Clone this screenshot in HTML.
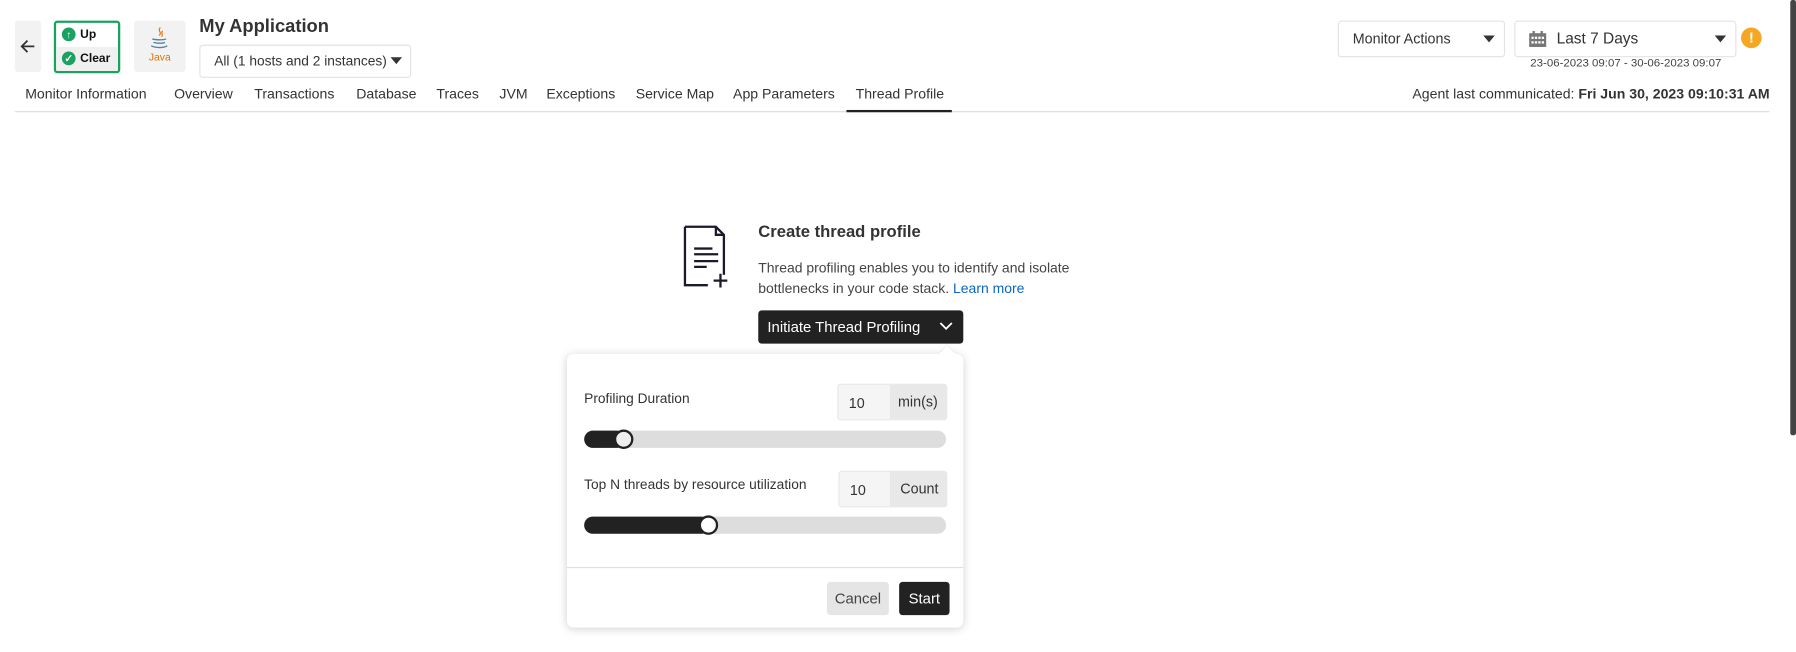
<!DOCTYPE html>
<html><head><meta charset="utf-8"><style>
html,body{margin:0;padding:0;background:#fff;overflow:hidden}
body{width:1796px;height:652px;position:relative}
#w{position:absolute;left:0;top:0;width:1568px;height:569px;transform:scale(1.14541);transform-origin:0 0;font-family:"Liberation Sans",sans-serif;color:#333}
.a{position:absolute}
.tab{position:absolute;top:75px;font-size:12.3px;color:#333}
.box{position:absolute;border:1px solid #e3e3e3;border-radius:3px;background:#fff}
</style></head><body><div id="w">
<div class="a" style="left:13px;top:18px;width:23px;height:45px;background:#f2f2f2;border-radius:3px"></div>
<svg class="a" style="left:17px;top:33px" width="15" height="15" viewBox="0 0 15 15"><path d="M13 7.5H2M7 2.5L2 7.5l5 5" stroke="#333" stroke-width="1.6" fill="none"/></svg>
<div class="a" style="left:47px;top:18px;width:54px;height:42px;border:2px solid #1aa260;border-radius:3px;overflow:hidden">
 <div style="height:21px;font:bold 10.5px 'Liberation Sans',sans-serif;line-height:21px;padding-left:21px;position:relative;color:#111">Up<span style="position:absolute;left:5px;top:4px;width:12px;height:12px;border-radius:50%;background:#1aa260;color:#fff;font-size:9px;line-height:12px;text-align:center">↑</span></div>
 <div style="height:21px;background:#f0f0f0;font:bold 10.5px 'Liberation Sans',sans-serif;line-height:21px;padding-left:21px;position:relative;color:#111">Clear<span style="position:absolute;left:5px;top:4px;width:12px;height:12px;border-radius:50%;background:#1aa260;color:#fff;font-size:9px;line-height:12px;text-align:center">✓</span></div>
</div>
<div class="a" style="left:117px;top:18px;width:45px;height:45px;background:#f2f2f2;border-radius:3px"></div>
<svg class="a" style="left:128px;top:22px" width="22" height="22" viewBox="0 0 22 22"><path d="M12 2c-3 3 2 4-1 7M14 5c-2 2 1 3-1 5" stroke="#e76f00" fill="none"/><path d="M5 12c3 1 10 1 12 0M6 15c3 1 8 1 10 0M4 18c4 2 11 2 14 0" stroke="#5382a1" fill="none" stroke-width="1.2"/></svg>
<div class="a" style="left:130px;top:45px;font-size:9px;color:#e76f00">Java</div>
<div class="a" style="left:174px;top:15px;font-weight:bold;font-size:16px;color:#333">My Application</div>
<div class="box" style="left:174px;top:39px;width:183px;height:27px"><span class="a" style="left:12px;top:6px;font-size:12px">All (1 hosts and 2 instances)</span><span class="a" style="left:166px;top:10px;border:5px solid transparent;border-top:6px solid #333"></span></div>
<div class="tab" style="left:22px">Monitor Information</div>
<div class="tab" style="left:152px">Overview</div>
<div class="tab" style="left:222px">Transactions</div>
<div class="tab" style="left:311px">Database</div>
<div class="tab" style="left:381px">Traces</div>
<div class="tab" style="left:436px">JVM</div>
<div class="tab" style="left:477px">Exceptions</div>
<div class="tab" style="left:555px">Service Map</div>
<div class="tab" style="left:640px">App Parameters</div>
<div class="tab" style="left:747px">Thread Profile</div>
<div class="a" style="left:13px;top:97px;width:1532px;height:1px;background:#ddd"></div>
<div class="a" style="left:739px;top:96px;width:92px;height:2px;background:#222"></div>
<div class="box" style="left:1168px;top:18px;width:144px;height:30px"><span class="a" style="left:12px;top:8px;font-size:12.5px">Monitor Actions</span><span class="a" style="left:126px;top:12px;border:5px solid transparent;border-top:6px solid #333"></span></div>
<div class="box" style="left:1322px;top:18px;width:192px;height:30px">
<svg class="a" style="left:12px;top:8px" width="15" height="14" viewBox="0 0 15 14"><rect x="0" y="2" width="15" height="12" fill="#777"/><g fill="#fff"><rect x="2" y="5" width="2" height="2"/><rect x="5" y="5" width="2" height="2"/><rect x="8" y="5" width="2" height="2"/><rect x="11" y="5" width="2" height="2"/><rect x="2" y="9" width="2" height="2"/><rect x="5" y="9" width="2" height="2"/><rect x="8" y="9" width="2" height="2"/><rect x="11" y="9" width="2" height="2"/></g><rect x="3" y="0" width="2" height="3" fill="#777"/><rect x="10" y="0" width="2" height="3" fill="#777"/></svg>
<span class="a" style="left:36px;top:7px;font-size:13.5px">Last 7 Days</span><span class="a" style="left:174px;top:12px;border:5px solid transparent;border-top:6px solid #333"></span></div>
<div class="a" style="left:1520px;top:24px;width:18px;height:18px;border-radius:50%;background:#f5a623;color:#fff;font-weight:bold;font-size:13px;text-align:center;line-height:18px">!</div>
<div class="a" style="left:1336px;top:50px;font-size:10px;color:#444">23-06-2023 09:07 - 30-06-2023 09:07</div>
<div class="a" style="right:23px;top:75px;font-size:12.3px;color:#333">Agent last communicated: <b>Fri Jun 30, 2023 09:10:31 AM</b></div>
<div class="a" style="left:1563px;top:0;width:5px;height:380px;background:#444;border-radius:2px"></div>

<svg class="a" style="left:596px;top:196px" width="44" height="56" viewBox="0 0 44 56"><path d="M2 2H29L36 9V44M22 53H2V2" stroke="#1a1a2e" stroke-width="2" fill="none"/><path d="M29 2V9H36" stroke="#1a1a2e" stroke-width="2" fill="none"/><path d="M10 21H26M10 26H31M10 32H31M10 37H21" stroke="#1a1a2e" stroke-width="2"/><path d="M33 43V55M27 49H39" stroke="#1a1a2e" stroke-width="2"/></svg>
<div class="a" style="left:662px;top:195px;font-weight:bold;font-size:14.5px;color:#333">Create thread profile</div>
<div class="a" style="left:662px;top:225px;font-size:12.2px;line-height:18px;color:#444">Thread profiling enables you to identify and isolate<br>bottlenecks in your code stack. <span style="color:#0a66c2">Learn more</span></div>
<div class="a" style="left:662px;top:271px;width:179px;height:29px;background:#222;border-radius:3px;color:#fff;font-size:13px"><span class="a" style="left:8px;top:7px">Initiate Thread Profiling</span><svg class="a" style="left:158px;top:10px" width="12" height="8" viewBox="0 0 12 8"><path d="M1 1l5 5 5-5" stroke="#fff" stroke-width="1.6" fill="none"/></svg></div>
<div class="a" style="left:495px;top:309px;width:346px;height:239px;background:#fff;border-radius:6px;box-shadow:0 1px 8px rgba(0,0,0,.18)"></div>
<div class="a" style="left:822px;top:304px;width:10px;height:10px;background:#fff;transform:rotate(45deg);box-shadow:-1px -1px 2px rgba(0,0,0,.06)"></div>
<div class="a" style="left:510px;top:341px;font-size:12px;color:#333">Profiling Duration</div>
<div class="a" style="left:731px;top:335px;width:94px;height:30px;border:1px solid #e6e6e6;border-radius:3px;overflow:hidden;font-size:12.5px"><div class="a" style="left:0;top:0;width:45px;height:30px;background:#f5f5f5"><span class="a" style="left:9px;top:9px">10</span></div><div class="a" style="left:45px;top:0;width:49px;height:30px;background:#e8e8e8"><span class="a" style="left:7px;top:8px">min(s)</span></div></div>
<div class="a" style="left:510px;top:376px;width:316px;height:15px;background:#ddd;border-radius:8px"></div>
<div class="a" style="left:510px;top:376px;width:36px;height:15px;background:#222;border-radius:8px"></div>
<div class="a" style="left:536px;top:375px;width:13px;height:13px;background:#eee;border:2px solid #222;border-radius:50%"></div>
<div class="a" style="left:510px;top:416px;font-size:12px;color:#333">Top N threads by resource utilization</div>
<div class="a" style="left:732px;top:411px;width:93px;height:30px;border:1px solid #e6e6e6;border-radius:3px;overflow:hidden;font-size:12.5px"><div class="a" style="left:0;top:0;width:44px;height:30px;background:#f5f5f5"><span class="a" style="left:9px;top:9px">10</span></div><div class="a" style="left:44px;top:0;width:49px;height:30px;background:#e8e8e8"><span class="a" style="left:9px;top:8px">Count</span></div></div>
<div class="a" style="left:510px;top:451px;width:316px;height:15px;background:#ddd;border-radius:8px"></div>
<div class="a" style="left:510px;top:451px;width:110px;height:15px;background:#222;border-radius:8px"></div>
<div class="a" style="left:610px;top:450px;width:13px;height:13px;background:#fff;border:2px solid #222;border-radius:50%"></div>
<div class="a" style="left:495px;top:495px;width:346px;height:1px;background:#e0e0e0"></div>
<div class="a" style="left:722px;top:508px;width:54px;height:29px;background:#e5e5e5;border-radius:3px;font-size:13px;color:#444;text-align:center;line-height:29px">Cancel</div>
<div class="a" style="left:785px;top:508px;width:44px;height:29px;background:#222;border-radius:3px;font-size:13px;color:#fff;text-align:center;line-height:29px">Start</div>
</div></body></html>
